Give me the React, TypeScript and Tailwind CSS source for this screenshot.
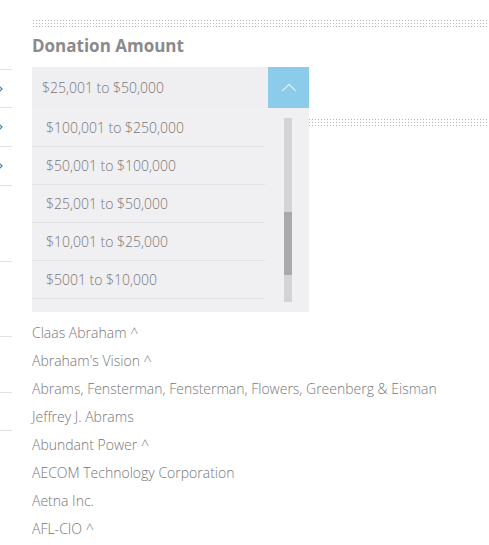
import React from "react";

const amounts = [
  "$100,001 to $250,000",
  "$50,001 to $100,000",
  "$25,001 to $50,000",
  "$10,001 to $25,000",
  "$5001 to $10,000",
  "$1001 to $5000",
];

const donors = [
  "Claas Abraham ^",
  "Abraham's Vision ^",
  "Abrams, Fensterman, Fensterman, Flowers, Greenberg & Eisman",
  "Jeffrey J. Abrams",
  "Abundant Power ^",
  "AECOM Technology Corporation",
  "Aetna Inc.",
  "AFL-CIO ^",
];

const Chevron = () => (
  <svg width="6" height="8" viewBox="0 0 6 8" className="-ml-[2px]">
    <polyline points="0.5,0.5 4,4 0.5,7.5" fill="none" stroke="#3d7fa8" strokeWidth="1.2" />
  </svg>
);

const DotBand = ({ className }: { className?: string }) => (
  <div
    className={
      "h-[10px] bg-[radial-gradient(circle,#b5b5b5_0.7px,transparent_0.9px)] bg-[length:3px_3px] " +
      (className ?? "")
    }
  />
);

const App = (): JSX.Element => {
  return (
    <div className="w-[489px] h-[545px] overflow-hidden bg-white flex font-['Open_Sans',sans-serif] text-[#777777]">
      {/* edge of the side panel */}
      <div className="w-[12px] shrink-0 flex flex-col">
        <div className="h-[70px] border-b border-[#e2e2e2]" />
        <div className="h-[38px] border-b border-[#e2e2e2] flex items-center"><Chevron /></div>
        <div className="h-[39px] border-b border-[#e2e2e2] flex items-center"><Chevron /></div>
        <div className="h-[39px] border-b border-[#e2e2e2] flex items-center"><Chevron /></div>
        <div className="h-[76px] border-b border-[#e2e2e2]" />
        <div className="h-[75px] border-b border-[#e2e2e2]" />
        <div className="h-[56px] border-b border-[#e2e2e2]" />
        <div className="h-[38px] border-b border-[#e2e2e2]" />
      </div>

      <div className="ml-[20px] flex-1 flex flex-col">
        <DotBand className="mt-[19px]" />
        <h2 className="mt-[2px] h-[30px] leading-[30px] text-[17px] font-bold text-[#8a8a8a]">
          Donation Amount
        </h2>

        <div className="relative mt-[6px] w-[277px]">
          <div className="h-[41px] flex bg-[#efeef0]">
            <span className="flex-1 pl-[10px] text-[14px] font-light leading-[41px]">$25,001 to $50,000</span>
            <div className="w-[41px] h-[41px] bg-[#8ccbea] flex items-center justify-center">
              <svg width="16" height="9" viewBox="0 0 16 9">
                <polyline points="1,8 8,1.5 15,8" fill="none" stroke="#d6ecf7" strokeWidth="1.3" />
              </svg>
            </div>
          </div>

          <div className="absolute left-0 top-full w-[277px] h-[204px] bg-[#f0eff1] z-10 flex overflow-hidden">
            <ul className="w-[233px] pt-[1px] flex flex-col">
              {amounts.map((a) => (
                <li
                  key={a}
                  className="h-[38px] shrink-0 border-b border-[#e3e2e4] pl-[14px] text-[14px] font-light leading-[38px]"
                >
                  {a}
                </li>
              ))}
            </ul>
            <div className="ml-[19px] mt-[10px] w-[8px] h-[184px] bg-[#d3d3d3] flex flex-col">
              <div className="mt-[94px] h-[63px] bg-[#a9a9a9]" />
            </div>
          </div>
        </div>

        <DotBand className="mt-[10px]" />

        <ul className="mt-[191px] flex flex-col">
          {donors.map((d) => (
            <li key={d} className="h-[28px] leading-[28px] text-[14px] font-light whitespace-nowrap">
              {d}
            </li>
          ))}
        </ul>
      </div>
    </div>
  );
};

export default App;
